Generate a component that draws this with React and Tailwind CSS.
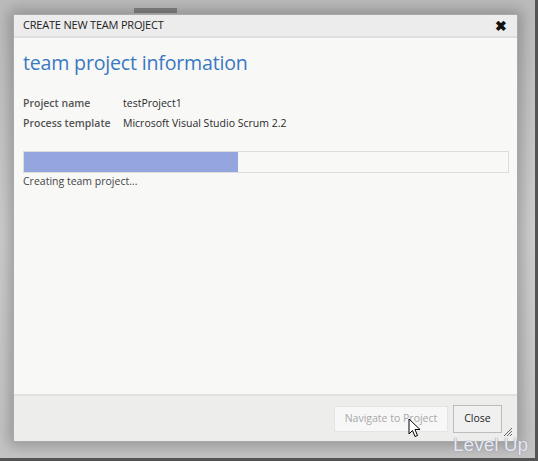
import React from "react";

const font = { fontFamily: '"Segoe UI", "Open Sans", "Noto Sans", sans-serif' };

function Cursor() {
  return (
    <svg width="14" height="20" viewBox="0 0 14 20" className="absolute left-[408px] top-[418px]">
      <path d="M1 1 L1 16 L4.5 12.5 L7 18.5 L9.5 17.5 L7 11.5 L12 11.5 Z" fill="#fff" stroke="#000" strokeWidth="1" strokeLinejoin="round" />
    </svg>
  );
}

function Grip() {
  return (
    <svg width="10" height="10" viewBox="0 0 10 10" className="absolute right-[4px] bottom-[4px]">
      <path d="M9 1 L1 9 M9 4 L4 9 M9 7 L7 9" stroke="#666" strokeWidth="1" />
    </svg>
  );
}

export default function App() {
  return (
    <div
      className="relative w-[538px] h-[461px] overflow-hidden bg-gradient-to-b from-[#bcbcbc] via-[#cfcfcf] to-[#c4c4c4]"
      style={font}
    >
      {/* page behind the dialog */}
      <div className="absolute left-[134px] top-[8px] w-[43px] h-[5px] bg-[#858585]" />
      <div className="absolute right-0 top-0 w-[3px] h-full bg-[#555]" />
      <div className="absolute left-0 bottom-0 w-full h-[3px] bg-[#555]" />

      <div className="pl-[13px] pt-[14px]">
        <div className="relative w-[505px] h-[428px] flex flex-col bg-[#f8f8f7] border border-[#a9a9a9] shadow-[0_0_14px_4px_rgba(0,0,0,0.25)]">
          <div className="h-[23px] shrink-0 flex items-center justify-between pl-[9px] pr-[10px] bg-[#ececec] border-b-[2px] border-[#dedede]">
            <span className="text-[11px] text-[#222] tracking-[-0.2px]">CREATE NEW TEAM PROJECT</span>
            <span className="text-[14px] font-bold leading-none text-[#111]">✖</span>
          </div>

          <div className="flex-1 flex flex-col px-[9px]">
            <h1 className="mt-[11px] text-[19.6px] leading-[28px] text-[#3a78c2] tracking-[-0.2px]">
              team project information
            </h1>
            <div className="mt-[17px] grid grid-cols-[100px_1fr] gap-y-[1px] text-[10.5px] leading-[19px] text-[#2a2a2a]">
              <span className="font-semibold text-[#555]">Project name</span>
              <span>testProject1</span>
              <span className="font-semibold text-[#555]">Process template</span>
              <span>Microsoft Visual Studio Scrum 2.2</span>
            </div>
            <div className="mt-[18px] w-[486px] h-[22px] border border-[#dcdcdc] bg-[#f8f8f7]">
              <div className="w-[214px] h-full bg-[#94a6dd]" />
            </div>
            <div className="mt-[1px] text-[10.5px] text-[#444]">Creating team project...</div>
          </div>

          <div className="h-[47px] shrink-0 flex items-center justify-end gap-[5px] pr-[15px] bg-[#ededec] border-t-[2px] border-[#e0e0e0]">
            <button className="h-[26px] w-[114px] text-[10.5px] text-[#a8a8a8] bg-[#f7f7f7] border border-[#e4e4e4]">
              Navigate to Project
            </button>
            <button className="h-[28px] w-[49px] text-[10.5px] text-[#222] bg-[#f0f0f0] border border-[#bcbcbc]">
              Close
            </button>
          </div>
          <Grip />
        </div>
      </div>

      <Cursor />
      <div
        className="absolute left-[453px] top-[435px] whitespace-nowrap text-[19px] leading-none text-white/80"
        style={{ fontFamily: '"Liberation Sans", sans-serif', textShadow: "0 0 1px #8a8fa8, 0 0 1px #8a8fa8" }}
      >
        Level Up
      </div>
    </div>
  );
}
